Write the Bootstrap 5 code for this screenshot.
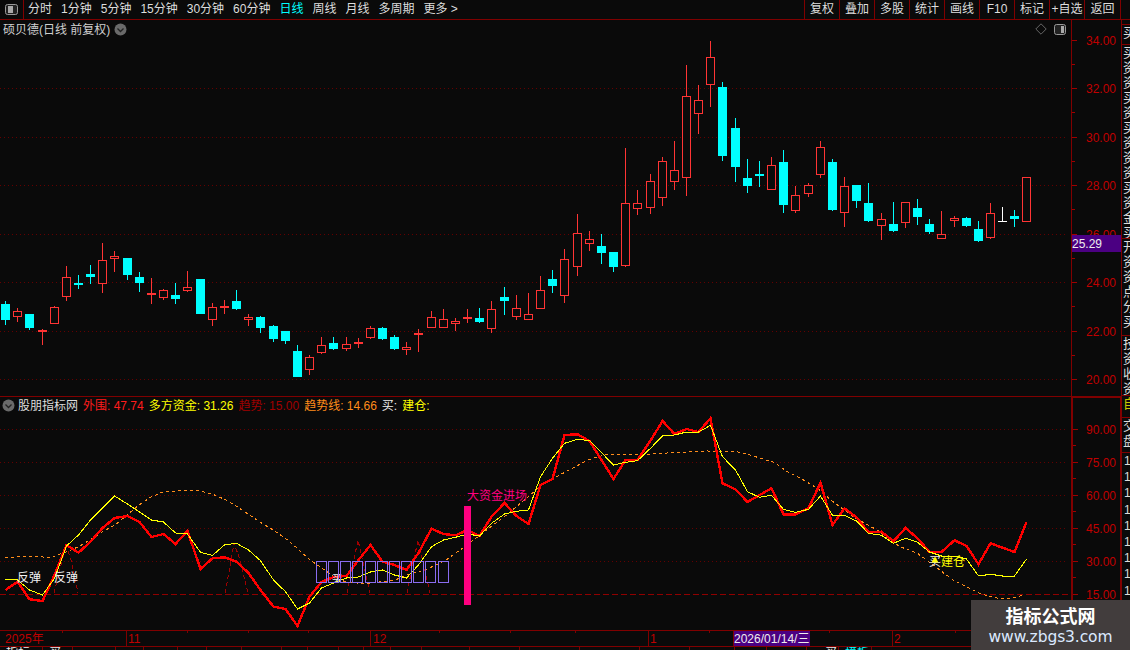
<!DOCTYPE html>
<html lang="zh-CN">
<head>
<meta charset="utf-8">
<title>硕贝德</title>
<link rel="stylesheet" href="https://cdn.jsdelivr.net/npm/bootstrap@5.3.0/dist/css/bootstrap.min.css">
<style>
html,body{margin:0;background:#0a0a0a}
.terminal{position:relative;width:1130px;height:650px;overflow:hidden;background:#0a0a0a;color:#ddd;
 font:12px/1 "Liberation Sans","Noto Sans CJK SC",sans-serif}
.topbar{height:20px;border-bottom:1px solid #800000;padding-right:9px}
.side-toggle{width:24px;border-right:1px solid #800000}
.period{margin-left:9px;line-height:19px;white-space:nowrap}
.period-first{margin-left:4px}
.period-on{color:#00ffff}
.tool{width:35px;border-left:1px solid #800000;line-height:19px;text-align:center}
.tool-last{width:37px;border-right:1px solid #800000}
.workspace{height:630px}
.charts{width:1121px}
.pane{position:relative}
.pane-main{height:377px;border-bottom:1px solid #800000}
.pane-sub{height:233px}
.pane svg,.time-axis svg{display:block}
.legend{position:absolute;display:flex;align-items:center;white-space:nowrap;pointer-events:none}
.legend-main{left:3px;top:3px;color:#cfcfcf}
.legend-sub{left:2px;top:2px;gap:5px}
.legend-sub .name{color:#ddd;margin-left:-2px}
.c-red{color:#ff1c1c}.c-yellow{color:#ffff00}.c-dark{color:#a00000}.c-orange{color:#ff8c1a}.c-white{color:#eee}
.round-icon{flex:none}
.corner-tools{position:absolute;right:55px;top:3px;gap:7px}
.time-axis{height:17px;border-top:1px solid #800000;border-bottom:1px solid #800000}
.tabs{height:3px;overflow:hidden}
.tabcell{border-right:1px solid #800000;height:3px;padding-left:6px;overflow:hidden;line-height:12px;white-space:nowrap;color:#eee}
.tab-cyan{color:#00ffff}
.sidebar{width:9px;border-left:1px solid #800000;overflow:hidden;color:#ddd}
.side-group{border-bottom:1px solid #800000;padding-left:1px;overflow:hidden;line-height:15px;font-size:13px;white-space:pre-line}
.side-yellow{color:#c8c800}
.side-num{border-bottom:0;line-height:16.2px;font-size:12px;padding-left:2px}
.stamp{position:absolute;left:971px;top:600px;width:159px;height:50px;background:#423d3d;text-align:center}
.stamp-title{font:700 18px/20px "Noto Sans CJK SC",sans-serif;color:#fff;margin-top:5px}
.stamp-url{font:15.5px/20px "DejaVu Sans","Liberation Sans",sans-serif;color:#dbe9ff;margin-top:2px;letter-spacing:-.1px}
</style>
</head>
<body>
<div class="terminal d-flex flex-column">
  <div class="topbar d-flex flex-shrink-0">
    <div class="side-toggle d-flex align-items-center justify-content-center">
      <svg width="13" height="11" viewBox="0 0 13 11"><rect x=".5" y=".5" width="12" height="10" rx="2" fill="#222" stroke="#999"/><rect x="3" y="2" width="5" height="7" fill="#aaa"/></svg>
    </div>
    <span class="period period-first">分时</span><span class="period">1分钟</span><span class="period">5分钟</span><span class="period">15分钟</span><span class="period">30分钟</span><span class="period">60分钟</span><span class="period period-on">日线</span><span class="period">周线</span><span class="period">月线</span><span class="period">多周期</span><span class="period">更多 &gt;</span>
    <div class="ms-auto d-flex">
      <span class="tool">复权</span><span class="tool">叠加</span><span class="tool">多股</span><span class="tool">统计</span><span class="tool">画线</span><span class="tool">F10</span><span class="tool">标记</span><span class="tool">+自选</span><span class="tool tool-last">返回</span>
    </div>
  </div>
  <div class="workspace d-flex">
    <div class="charts d-flex flex-column">
      <div class="pane pane-main" id="paneMain">
        <div class="legend legend-main">硕贝德(日线 前复权)
          <svg class="round-icon ms-1" width="13" height="13" viewBox="0 0 13 13"><circle cx="6.5" cy="6.5" r="6" fill="#6a6a6a"/><path d="M3.5 5.5l3 3 3-3" fill="none" stroke="#222" stroke-width="1.3"/></svg>
        </div>
        <div class="corner-tools d-flex align-items-center">
          <svg width="12" height="12" viewBox="0 0 12 12"><path d="M6 .8L11.2 6 6 11.2.8 6z" fill="none" stroke="#666"/></svg>
          <svg width="12" height="11" viewBox="0 0 12 11"><rect x=".5" y=".5" width="11" height="10" rx="2" fill="#222" stroke="#999"/><rect x="7" y="2" width="3" height="7" fill="#aaa"/></svg>
        </div>
      </div>
      <div class="pane pane-sub" id="paneSub">
        <div class="legend legend-sub">
          <svg class="round-icon" width="13" height="13" viewBox="0 0 13 13"><circle cx="6.5" cy="6.5" r="6" fill="#6a6a6a"/><path d="M3.5 5.5l3 3 3-3" fill="none" stroke="#222" stroke-width="1.3"/></svg>
          <span class="name">股朋指标网</span><span class="c-red">外围: 47.74</span><span class="c-yellow">多方资金: 31.26</span><span class="c-dark">趋势: 15.00</span><span class="c-orange">趋势线: 14.66</span><span class="c-white">买:</span><span class="c-yellow">建仓:</span>
        </div>
      </div>
      <div class="time-axis" id="timeAxis"></div>
      <div class="tabs d-flex" id="tabs"></div>
    </div>
    <div class="sidebar d-flex flex-column">
      <div class="side-group" style="height:5px"></div>
      <div class="side-group" style="height:20px">买</div>
      <div class="side-group" style="height:194px">买
资
资
买
资
买
资
资
资
买
资
金
买</div>
      <div class="side-group" style="height:97px">开
资
资
点
分
买</div>
      <div class="side-group" style="height:60px">技
资
收
资</div>
      <div class="side-group side-yellow" style="height:22px">自</div>
      <div class="side-group" style="height:35px">交
盘</div>
      <div class="side-group side-num">1
1
1
1
1
1
1
1
1
1
1
1</div>
    </div>
  </div>
  <div class="stamp">
    <div class="stamp-title">指标公式网</div>
    <div class="stamp-url">www.zbgs3.com</div>
  </div>
</div>
<script>
(function(){
var px=function(i){return Math.floor(5.55+12.16*i)};
var dx=function(i){return px(i)+.5};
// type, high, bodyTop, bodyBottom, low
var C=[['c',301,304,320,325],['r',308,311,317,322],['c',314,314,328,330],['r',329,330,332,345],['r',306,307,324,324],['r',266,277,297,301],['c',275,283,285,289],['c',265,274,277,284],['r',243,260,284,293],['r',251,256,259,272],['c',258,258,275,280],['c',272,277,283,292],['r',278,293,295,304],['r',289,290,298,300],['c',283,295,299,304],['r',271,287,291,292],['c',279,279,314,314],['r',303,307,320,326],['r',300,306,308,314],['c',290,301,309,310],['r',314,317,320,326],['c',316,317,328,333],['c',325,326,339,342],['c',331,331,341,344],['c',345,351,377,377],['r',355,357,370,375],['r',337,345,353,354],['c',337,343,349,350],['r',337,344,349,351],['r',338,342,344,348],['r',326,328,338,339],['c',327,328,339,340],['c',335,337,349,350],['r',342,347,350,355],['r',329,333,335,352],['r',311,317,328,328],['r',309,319,328,328],['r',318,321,324,331],['r',309,317,319,323],['c',308,318,322,323],['r',301,309,329,333],['c',287,297,301,315],['r',295,308,317,320],['r',293,314,320,320],['r',276,290,309,309],['c',270,279,286,293],['r',249,259,296,303],['r',214,233,267,276],['r',231,239,244,251],['c',234,246,253,264],['c',252,252,267,272],['r',148,203,266,267],['r',190,203,209,215],['r',174,181,208,214],['r',157,161,198,206],['r',141,170,182,190],['r',65,96,178,196],['r',85,100,114,134],['r',41,57,85,107],['c',82,87,156,161],['c',118,128,167,182],['c',159,178,186,193],['c',161,174,176,187],['r',157,165,190,190],['c',150,162,205,213],['r',186,195,211,213],['r',183,185,194,197],['r',141,147,175,178],['c',159,162,210,211],['r',177,186,213,227],['c',185,185,201,208],['c',183,203,221,222],['r',213,219,226,240],['c',202,224,231,232],['r',202,202,223,228],['c',199,208,217,225],['c',219,224,232,234],['r',211,234,239,239],['r',216,218,221,227],['c',217,218,226,227],['c',221,229,241,242],['r',203,213,238,239],['w',207,221,222,222],['c',210,216,219,227],['r',177,177,222,222]];
var RED=[590,581.7,599.3,601,575,545,552.7,541.7,528,518,516,522,537,534,544,531,569,558.3,557.3,561.7,573,590,606.7,609,626,596.7,582,577,576,560,545,561.7,565,570,553,528.7,534,535.3,530,536,516.7,503,516,524,485,479,435,434.3,441,460,479,460,460,440.7,421,434,429,432,418.3,483.3,489.3,502,495,488.3,514.3,514.3,508.3,482.7,525,508.3,517.3,532.3,531.7,541.3,528,538.3,552,552,540.3,546,564.3,543.3,547.7,552,522.3];
var YEL=[579.3,580,590,595,578.3,546,535,520,508,496,504,512,520,522,533,534,552.3,555.3,545,543.3,550,560.7,580,591.7,609,603,588,583,578,577,572,570,575,578,565,546.7,540,537.3,534,536,523.3,514,511.3,510,476.7,458.3,443.3,439.3,440.7,452.7,465,462.3,460.7,448.3,436,435,432,432,425.3,456.7,470,491.7,497.3,495.3,509.3,512.3,509.3,496,515.3,515.3,521,533.3,535.3,543.3,538.3,542.3,552,556,556,559,576,574.3,576,576,559];
var ORG=[[5,557.7],[20,556.5],[33,556],[50,557.7],[66,552],[78,547],[90,540],[102,532],[115,525],[127,515],[139,505],[151,497],[163,492],[175,491],[187,490],[200,491],[212,494],[224,499],[236,506],[248,514],[260,522],[273,530],[285,538],[297,548],[310,560],[321.7,568],[333,576],[345,581.7],[357,583],[370,583],[382,581.7],[394,580.7],[406,575],[425,570],[445,560.7],[468,544.3],[480,535],[504,517],[528,497],[540,486],[564,472.7],[588,460],[607,454],[633,455],[667,453],[707,451],[737,451.7],[750,455],[775,462.7],[787,471.7],[800,478],[817,488],[833,501.7],[853,516.7],[877,530],[900,546.7],[917,553],[933,565],[953,580],[978,592.7],[990,596.7],[1003,599],[1017,597.3],[1025,594]];
var SPK=[[[54,593],[66,545],[71,560],[78,593]],[[225,593],[230,567],[234,543],[240,560],[248,593]],[[347,593],[358,540],[370,593]],[[407,593],[418,540],[430,593]]];
var GREY='#800000',GRID='#640000';
function poly(arr){return arr.map(function(y,i){return dx(i)+','+y}).join(' ')}
function pts(a){return a.map(function(p){return p.join(',')}).join(' ')}
function hline(y,x2,c,d){return '<line x1="0" x2="'+x2+'" y1="'+(y+.5)+'" y2="'+(y+.5)+'" stroke="'+c+'" stroke-dasharray="'+d+'" shape-rendering="crispEdges"/>'}
function txt(x,y,s,c,extra){return '<text x="'+x+'" y="'+y+'" fill="'+c+'" font-size="12" '+(extra||'')+'>'+s+'</text>'}
var FF='font-family="Liberation Sans,Noto Sans CJK SC,sans-serif"';
// main chart
var m='';
[88,137,185,234,282,331,379].forEach(function(y){m+=hline(y,1068,GRID,'1 3')});
C.forEach(function(k,i){
  var x=px(i),col=k[0]=='c'?'#00ffff':k[0]=='w'?'#ffffff':'#ff3434';
  var rc=function(X,Y,W,H,f){return '<rect x="'+X+'" y="'+Y+'" width="'+W+'" height="'+H+'" fill="'+f+'"/>'};
  if(k[2]>k[1])m+=rc(x,k[1],1,k[2]-k[1],col);
  if(k[4]>k[3])m+=rc(x,k[3],1,k[4]-k[3],col);
  var h=k[3]-k[2];
  if(k[0]=='c'||h<=2)m+=rc(x-4,k[2],9,Math.max(h,k[0]=='w'?1:2),col);
  else m+='<rect x="'+(x-3.5)+'" y="'+(k[2]+.5)+'" width="8" height="'+(h-1)+'" fill="#0a0a0a" stroke="'+col+'"/>';
});
document.getElementById('paneMain').insertAdjacentHTML('afterbegin',
'<div class="d-flex"><svg width="1071" height="376" viewBox="0 20 1071 376" shape-rendering="crispEdges">'+m+'</svg><svg id="axM" width="50" height="376" viewBox="1071 20 50 376" '+FF+'></svg></div>');
var a='<line x1="1071.5" x2="1071.5" y1="20" y2="396" stroke="'+GREY+'" shape-rendering="crispEdges"/>';
[[40,'34.00'],[88,'32.00'],[137,'30.00'],[185,'28.00'],[234,'26.00'],[282,'24.00'],[331,'22.00'],[379,'20.00']].forEach(function(t){
  a+='<rect x="1072" y="'+t[0]+'" width="5" height="1" fill="#a00000"/><rect x="1072" y="'+(t[0]+24)+'" width="3" height="1" fill="#a00000"/>';
  a+=txt(1086,t[0]+5,t[1],'#c00000');
});
a+='<rect x="1072" y="235" width="49" height="17" fill="#4b0082"/>'+txt(1072,248,'25.29','#eee');
document.getElementById('axM').innerHTML=a;
// sub chart
var s='';
[429,462,495,528,561].forEach(function(y){s+=hline(y,1068,GRID,'1 3')});
s+=hline(594,1068,'#900000','6 3');
var CR='shape-rendering="crispEdges"';
SPK.forEach(function(p){s+='<polyline points="'+pts(p)+'" fill="none" stroke="#a00000" stroke-dasharray="4 3" '+CR+'/>'});
s+='<polyline points="'+pts(ORG)+'" fill="none" stroke="#ff8c1a" stroke-dasharray="3 3" '+CR+'/>';
s+='<polyline points="'+poly(RED)+'" fill="none" stroke="#ff0000" stroke-width="2.4" stroke-linejoin="miter" '+CR+'/>';
s+='<polyline points="'+poly(YEL)+'" fill="none" stroke="#ffff00" stroke-width="1" '+CR+'/>';
s+=txt(17,582,'反弹','#f2f2f2')+txt(54,582,'反弹','#f2f2f2');
s+='<text x="332" y="582" fill="#f2f2f2" font-size="10">买</text>';
for(var b=0;b<11;b++){s+='<rect x="'+(Math.round(316+12.15*b)+.5)+'" y="561.5" width="10" height="21" fill="none" stroke="#8a6cf0" stroke-width="1" '+CR+'/>'}
s+='<rect x="464" y="506" width="7" height="99" fill="#ff0080"/>';
s+=txt(467,500,'大资金进场','#ff0080');
s+=txt(929,566,'买','#f2f2f2')+'<path d="M935 556.5l3.5 6h-7z" fill="#ffff00"/>'+txt(941,566,'建仓','#ffff00');
document.getElementById('paneSub').insertAdjacentHTML('afterbegin',
'<div class="d-flex"><svg width="1071" height="233" viewBox="0 397 1071 233" '+FF+'>'+s+'</svg><svg id="axS" width="50" height="233" viewBox="1071 397 50 233" '+FF+'></svg></div>');
var a2='<rect x="1071" y="397" width="2" height="233" fill="'+GREY+'"/><rect x="1071" y="397" width="50" height="1" fill="'+GREY+'"/><rect x="1120" y="397" width="1" height="233" fill="'+GREY+'"/>';
[[429,'90.00'],[462,'75.00'],[495,'60.00'],[528,'45.00'],[561,'30.00'],[594,'15.00']].forEach(function(t){
  a2+='<rect x="1073" y="'+t[0]+'" width="5" height="1" fill="#a00000"/><rect x="1073" y="'+(t[0]+16)+'" width="3" height="1" fill="#a00000"/>';
  a2+=txt(1086,t[0]+5,t[1],'#c00000');
});
document.getElementById('axS').innerHTML=a2;
// time axis
var t='';
[[126,'11',128],[370,'12',373],[648,'1',650],[892,'2',894]].forEach(function(d){
  t+='<rect x="'+d[0]+'" y="631" width="1" height="15" fill="'+GREY+'"/>'+txt(d[2],643,d[1],'#c00000');
});
[62,187,248,308,439,510,575,709,829,955,1010].forEach(function(x){t+='<rect x="'+x+'" y="631" width="1" height="2" fill="'+GREY+'"/>'});
t+=txt(5,643,'2025年','#c00000');
t+='<rect x="733" y="631" width="77" height="15" fill="#4b0082"/><rect x="733" y="631" width="1" height="15" fill="'+GREY+'"/>'+txt(734,643,'2026/01/14/三','#eee');
document.getElementById('timeAxis').innerHTML='<svg width="1121" height="15" viewBox="0 631 1121 15" '+FF+'>'+t+'</svg>';
// clipped tab strip
var edges=[43,73,116,144,178,207,242,282,308,339,364,391,422,470,520,580,640,690,735,767,807,839,872,1121];
var labels={0:'指标',1:'买',21:'　买'},last=0,h='';
edges.forEach(function(e,i){
  var w=e-last;last=e;
  h+='<div class="tabcell'+(i==22?' tab-cyan':'')+'" style="width:'+w+'px">'+(i==22?'模板':(labels[i]||''))+'</div>';
});
document.getElementById('tabs').innerHTML=h;
})();
</script>
<script src="https://cdn.jsdelivr.net/npm/bootstrap@5.3.0/dist/js/bootstrap.bundle.min.js"></script>
</body>
</html>
